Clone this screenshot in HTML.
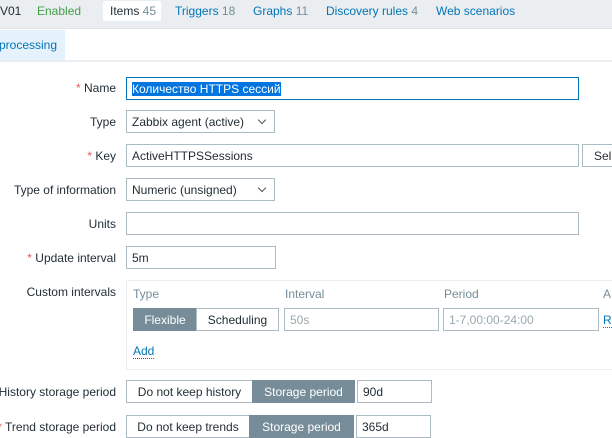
<!DOCTYPE html><html><head><meta charset="utf-8"><style>
*{box-sizing:border-box;margin:0;padding:0}
body{width:612px;height:424px;overflow:hidden;background:#fff;font-family:"Liberation Sans",Arial,sans-serif;font-size:12px;color:#1f2c33;position:relative}
.a{position:absolute;white-space:nowrap}
.lbl{position:absolute;right:496px;white-space:nowrap}
.st{color:#e45959}
.in{position:absolute;border:1px solid #acbbc2;background:#fff;height:23px;padding:4px 5px;white-space:nowrap;overflow:hidden}
.sel:after{content:"";position:absolute;right:9px;top:6px;width:5px;height:5px;border-right:1px solid #555;border-bottom:1px solid #555;transform:rotate(45deg)}
.blue{color:#0275b8}
.g{color:#768d99}
.ph{color:#9aa8af}
.dark{background:#768d99;color:#fff;border-color:#768d99}
.c{text-align:center}
</style></head><body>
<div class="a" style="left:0;top:0;width:612px;height:29px;background:#ebeef0;border-bottom:1px solid #dfe4e7"></div>
<div class="a" style="left:0;top:4px">V01</div>
<div class="a" style="left:37px;top:4px;color:#429e47">Enabled</div>
<div class="a" style="left:103px;top:1px;width:58px;height:20px;background:#fff;border-radius:2px"></div>
<div class="a" style="left:110px;top:4px">Items <span class="g">45</span></div>
<div class="a blue" style="left:175px;top:4px">Triggers <span class="g">18</span></div>
<div class="a blue" style="left:253px;top:4px">Graphs <span class="g">11</span></div>
<div class="a blue" style="left:326px;top:4px">Discovery rules <span class="g">4</span></div>
<div class="a blue" style="left:436px;top:4px">Web scenarios</div>
<div class="a" style="left:0;top:30px;width:612px;height:32px;border-bottom:2px solid #ebeef0"></div>
<div class="a" style="left:0;top:30px;width:65px;height:30px;background:#e5f2fb"></div>
<div class="a blue" style="left:-1px;top:38px">processing</div>

<div class="lbl" style="top:81px"><span class="st">*</span> Name</div>
<div class="in" style="left:126px;top:77px;width:453px;border-color:#0275b8"><span style="background:#0275e0;color:#fff">Количество HTTPS сессий</span></div>
<div class="lbl" style="top:115px">Type</div>
<div class="in sel" style="left:126px;top:110px;width:149px">Zabbix agent (active)</div>
<div class="lbl" style="top:149px"><span class="st">*</span> Key</div>
<div class="in" style="left:126px;top:144px;width:453px">ActiveHTTPSSessions</div>
<div class="in" style="left:582px;top:144px;width:40px;padding-left:11px">Sel</div>
<div class="lbl" style="top:183px">Type of information</div>
<div class="in sel" style="left:126px;top:178px;width:149px">Numeric (unsigned)</div>
<div class="lbl" style="top:217px">Units</div>
<div class="in" style="left:126px;top:212px;width:453px"></div>
<div class="lbl" style="top:251px"><span class="st">*</span> Update interval</div>
<div class="in" style="left:126px;top:246px;width:150px">5m</div>

<div class="lbl" style="top:285px">Custom intervals</div>
<div class="a" style="left:126px;top:280px;width:500px;height:90px;border:1px solid #ebeef0"></div>
<div class="a g" style="left:133px;top:287px">Type</div>
<div class="a g" style="left:285px;top:287px">Interval</div>
<div class="a g" style="left:444px;top:287px">Period</div>
<div class="a g" style="left:603px;top:287px">A</div>
<div class="in dark c" style="left:133px;top:308px;width:64px">Flexible</div>
<div class="in c" style="left:196px;top:308px;width:83px">Scheduling</div>
<div class="in ph" style="left:284px;top:308px;width:155px">50s</div>
<div class="in ph" style="left:443px;top:308px;width:156px">1-7,00:00-24:00</div>
<div class="a blue" style="left:603px;top:313px;border-bottom:1px dotted #0275b8">R</div>
<div class="a blue" style="left:133px;top:344px;border-bottom:1px dotted #0275b8;line-height:14px">Add</div>

<div class="lbl" style="top:385px">History storage period</div>
<div class="in c" style="left:126px;top:380px;width:127px">Do not keep history</div>
<div class="in dark c" style="left:252px;top:380px;width:103px">Storage period</div>
<div class="in" style="left:357px;top:380px;width:75px">90d</div>

<div class="lbl" style="top:420px"><span class="st">*</span> Trend storage period</div>
<div class="in c" style="left:126px;top:415px;width:124px">Do not keep trends</div>
<div class="in dark c" style="left:249px;top:415px;width:105px">Storage period</div>
<div class="in" style="left:356px;top:415px;width:75px">365d</div>
</body></html>
